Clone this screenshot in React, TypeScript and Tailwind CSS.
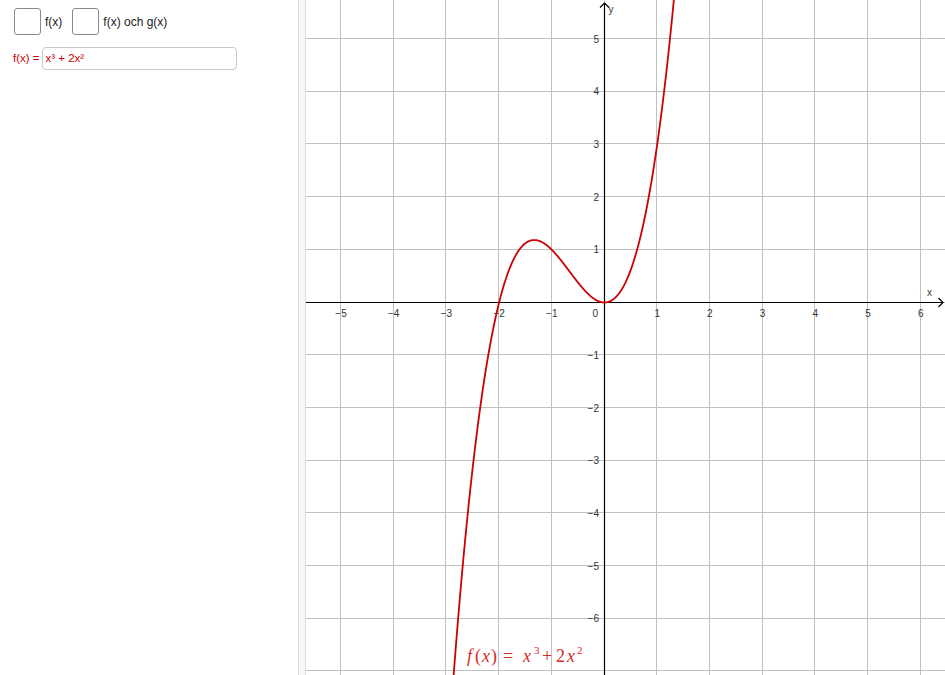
import React from "react";

const ox = 604.5;
const oy = 302.5;
const u = 52.7;

const X = (v: number) => ox + v * u;
const Y = (v: number) => oy - v * u;

function Graph() {
  const xs: number[] = [];
  for (let k = -5; k <= 6; k++) xs.push(k);
  const ys: number[] = [];
  for (let k = -7; k <= 5; k++) ys.push(k);

  // f(x) = x^3 + 2x^2
  const pts: string[] = [];
  for (let t = -2.95; t <= 1.4; t += 0.005) {
    const v = t * t * t + 2 * t * t;
    pts.push(`${X(t).toFixed(2)},${Y(v).toFixed(2)}`);
  }

  return (
    <svg width={639} height={675} viewBox="306 0 639 675" className="block">
      <g stroke="#c0c0c0" strokeWidth={1} shapeRendering="crispEdges">
        {xs.map((k) => (
          <line key={"v" + k} x1={Math.round(X(k)) - 0.5} y1={0} x2={Math.round(X(k)) - 0.5} y2={675} />
        ))}
        {ys.map((k) => (
          <line key={"h" + k} x1={306} y1={Math.round(Y(k)) - 0.5} x2={945} y2={Math.round(Y(k)) - 0.5} />
        ))}
      </g>

      {/* axes */}
      <g stroke="#000" strokeWidth={1.2} fill="none">
        <line x1={306} y1={oy} x2={943} y2={oy} />
        <polyline points={`938.5,298 943,${oy} 938.5,307`} />
        <line x1={ox} y1={3} x2={ox} y2={675} />
        <polyline points={`600,7.5 ${ox},3 609,7.5`} />
      </g>

      <g fontFamily="'Liberation Sans', Arial, sans-serif" fontSize={10} fill="#333">
        {xs.map((k) =>
          k === 0 ? null : (
            <text key={"xl" + k} x={X(k)} y={317} textAnchor="middle">
              {k < 0 ? "\u2212" + Math.abs(k) : k}
            </text>
          )
        )}
        <text x={598} y={317} textAnchor="end">0</text>
        {ys
          .filter((k) => k !== 0 && k > -7)
          .map((k) => (
            <text key={"yl" + k} x={599} y={Y(k) + 3.6} textAnchor="end">
              {k < 0 ? "\u2212" + Math.abs(k) : k}
            </text>
          ))}
        <text x={927} y={296}>x</text>
        <text x={608.5} y={13}>y</text>
      </g>

      <polyline points={pts.join(" ")} fill="none" stroke="#cc0000" strokeWidth={1.8} strokeLinejoin="round" />

      {/* label of the function, drawn like the math renderer */}
      <g fontFamily="'Liberation Serif', 'Times New Roman', serif" fontSize={18} fill="#d42a2a">
        <text x={467} y={662} fontStyle="italic">f</text>
        <text x={475} y={662}>(</text>
        <text x={482} y={662} fontStyle="italic">x</text>
        <text x={491} y={662}>)</text>
        <text x={503} y={662}>=</text>
        <text x={523} y={662} fontStyle="italic">x</text>
        <text x={534} y={654} fontSize={11}>3</text>
        <text x={542} y={662}>+</text>
        <text x={556} y={662}>2</text>
        <text x={567} y={662} fontStyle="italic">x</text>
        <text x={577} y={654} fontSize={11}>2</text>
      </g>
    </svg>
  );
}

function Checkbox({ label }: { label: string }) {
  return (
    <div className="flex items-center">
      <div className="w-[27px] h-[27px] rounded-[3px] border-[1.5px] border-[#8a8a8a] bg-white" />
      <span className="ml-[4px] text-[12px] text-[#222]">{label}</span>
    </div>
  );
}

export default function App() {
  return (
    <div className="flex w-[945px] h-[675px] bg-white overflow-hidden font-['Liberation_Sans',Arial,sans-serif]">
      <div className="w-[298px] shrink-0 bg-white">
        <div className="flex items-center gap-[10px] pl-[14px] pt-[8px]">
          <Checkbox label="f(x)" />
          <Checkbox label="f(x) och g(x)" />
        </div>
        <div className="flex items-center mt-[12px] pl-[13px]">
          <span className="text-[11.5px] text-[#cc0000] mr-[2px]">f(x) =</span>
          <div className="w-[195px] h-[23px] rounded-[4px] border border-[#c8c8c8] flex items-center pl-[3px] text-[11.5px] text-[#cc0000]">
            x³ + 2x²
          </div>
        </div>
      </div>
      <div className="w-[8px] shrink-0 border-l border-r border-[#dcdcdc] bg-[#f7f7f7]" />
      <div className="flex-1 relative">
        <Graph />
      </div>
    </div>
  );
}
